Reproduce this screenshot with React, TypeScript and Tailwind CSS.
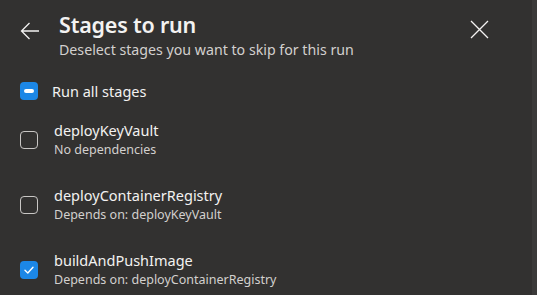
import React from "react";

const stages = [
  { name: "deployKeyVault", desc: "No dependencies", checked: false },
  { name: "deployContainerRegistry", desc: "Depends on: deployKeyVault", checked: false },
  { name: "buildAndPushImage", desc: "Depends on: deployContainerRegistry", checked: true },
];

function Box({ state }: { state: "none" | "checked" | "mixed" }) {
  if (state === "none") {
    return <div className="w-[18px] h-[18px] rounded-[4px] border border-[#c8c6c4] shrink-0" />;
  }
  return (
    <div className="w-[18px] h-[18px] rounded-[4px] bg-[#1c87e6] shrink-0 flex items-center justify-center">
      {state === "mixed" ? (
        <div className="w-[10px] h-[4px] rounded-[2px] bg-white" />
      ) : (
        <svg width="12" height="12" viewBox="0 0 12 12" fill="none">
          <path d="M2 6.3 L4.8 9 L10 3.3" stroke="white" strokeWidth="1.4" strokeLinecap="round" strokeLinejoin="round" />
        </svg>
      )}
    </div>
  );
}

export default function App() {
  return (
    <div
      className="w-[537px] h-[295px] bg-[#323130] text-[#f3f2f1] flex overflow-hidden"
      style={{ fontFamily: '"Noto Sans", "Open Sans", sans-serif' }}
    >
      <div className="flex-1 flex flex-col">
        <div className="flex items-start pt-[10px] pl-[20px] pr-[43px]">
          <svg width="20" height="18" viewBox="0 0 20 18" className="mt-[12px] shrink-0" fill="none">
            <path d="M19 9 H1.5 M9.5 1 L1.5 9 L9.5 17" stroke="#f3f2f1" strokeWidth="1.3" />
          </svg>
          <div className="ml-[19px] flex-1">
            <div className="text-[21.5px] font-semibold leading-[30px] tracking-[-0.2px]">Stages to run</div>
            <div className="text-[14.2px] leading-[18px] text-[#d2d0ce] mt-[1px]">Deselect stages you want to skip for this run</div>
          </div>
          <svg width="19" height="19" viewBox="0 0 19 19" className="mt-[10px] shrink-0" fill="none">
            <path d="M1 1 L18 18 M18 1 L1 18" stroke="#f3f2f1" strokeWidth="1.3" />
          </svg>
        </div>
        <div className="flex items-center pl-[20px] mt-[22px]">
          <Box state="mixed" />
          <span className="ml-[14px] text-[14.5px] leading-[20px]">Run all stages</span>
        </div>
        <div className="flex flex-col pl-[20px] mt-[19px] gap-[25px]">
          {stages.map((s) => (
            <div key={s.name} className="flex items-center">
              <Box state={s.checked ? "checked" : "none"} />
              <div className="ml-[16px] flex flex-col">
                <span className="text-[14.5px] leading-[20px]">{s.name}</span>
                <span className="text-[12.5px] leading-[20px] text-[#d2d0ce]">{s.desc}</span>
              </div>
            </div>
          ))}
        </div>
      </div>
      <div className="w-[5px] h-full bg-[#3b3a39]" />
    </div>
  );
}
